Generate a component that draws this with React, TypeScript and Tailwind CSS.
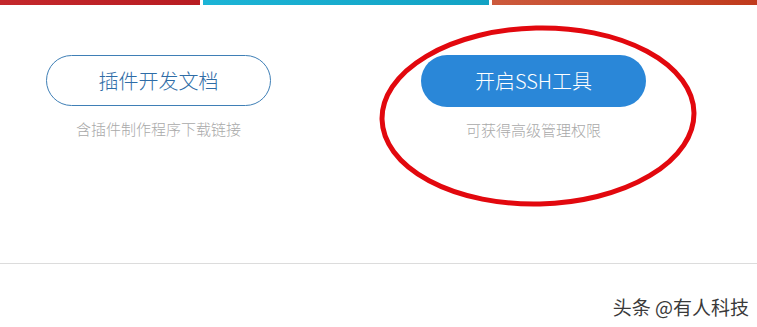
import React from 'react';

const FONT = '"Noto Sans CJK SC", "Noto Sans", "Liberation Sans", sans-serif';

export default function App() {
  return (
    <div className="relative h-[327px] w-[757px] overflow-hidden bg-white" style={{ fontFamily: FONT }}>
      <div className="flex h-[5px] gap-[3px]">
        <div className="w-[200px] bg-gradient-to-r from-[#c4282c] to-[#b81c22]" />
        <div className="w-[286px] bg-gradient-to-r from-[#1cb4d6] to-[#13a2c4]" />
        <div className="flex-1 bg-gradient-to-r from-[#cc5a3c] to-[#c03a1c]" />
      </div>
      <div className="flex h-[259px] gap-[150px] border-b border-[#dcdcdc] px-[46px] pt-[50px]">
        <Action label="插件开发文档" note="含插件制作程序下载链接" />
        <Action label="开启SSH工具" note="可获得高级管理权限" solid />
      </div>
      <div className="flex h-[62px] items-start justify-end pr-[8px] pt-[31px]">
        <span className="text-[19px] leading-[24px] text-[#3a3a3a]">头条 @有人科技</span>
      </div>
      <svg className="pointer-events-none absolute left-0 top-0" width="757" height="327" viewBox="0 0 757 327">
        <ellipse cx="538" cy="116" rx="156" ry="88" fill="none" stroke="#e2080e" strokeWidth="5" transform="rotate(-1.3 538 116)" />
      </svg>
    </div>
  );
}

function Action({ label, note, solid = false }: { label: string; note: string; solid?: boolean }) {
  return (
    <div className="flex w-[225px] flex-col items-center">
      <div className={solid ? 'flex h-[52px] w-full items-center justify-center rounded-full bg-[#2a87d8] text-[20px] font-light text-white' : 'flex h-[51px] w-full items-center justify-center rounded-full border border-[#3f7fb6] text-[20px] font-light text-[#2e6ca6]'}>{label}</div>
      <p className="mt-[13px] text-[15px] font-light leading-[20px] text-[#a9a9a9]">{note}</p>
    </div>
  );
}
